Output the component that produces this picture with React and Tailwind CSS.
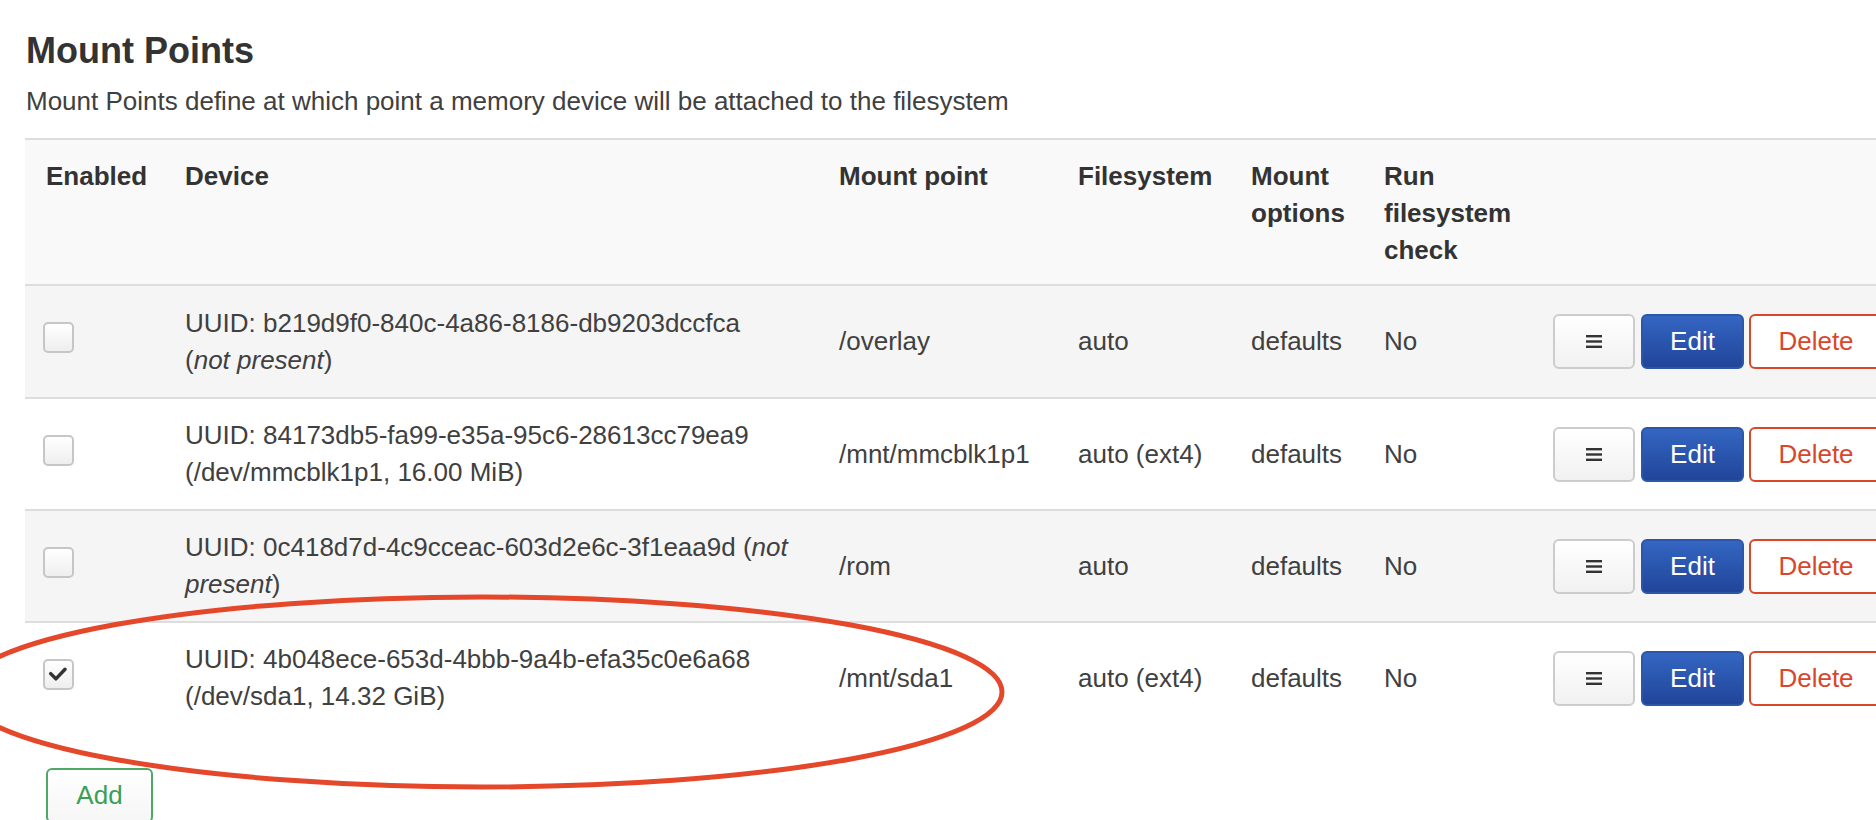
import React from 'react'

const rows = [
  {
    enabled: false,
    device: [
      'UUID: b219d9f0-840c-4a86-8186-db9203dccfca',
      <>
        (<i>not present</i>)
      </>,
    ],
    mount: '/overlay',
    fs: 'auto',
    striped: true,
  },
  {
    enabled: false,
    device: ['UUID: 84173db5-fa99-e35a-95c6-28613cc79ea9', '(/dev/mmcblk1p1, 16.00 MiB)'],
    mount: '/mnt/mmcblk1p1',
    fs: 'auto (ext4)',
    striped: false,
  },
  {
    enabled: false,
    device: [
      <>
        UUID: 0c418d7d-4c9cceac-603d2e6c-3f1eaa9d (<i>not</i>
      </>,
      <>
        <i>present</i>)
      </>,
    ],
    mount: '/rom',
    fs: 'auto',
    striped: true,
  },
  {
    enabled: true,
    device: ['UUID: 4b048ece-653d-4bbb-9a4b-efa35c0e6a68', '(/dev/sda1, 14.32 GiB)'],
    mount: '/mnt/sda1',
    fs: 'auto (ext4)',
    striped: false,
  },
]

const cols = 'grid grid-cols-[139px_654px_239px_173px_133px_169px_1fr]'

function Checkbox({ checked }) {
  return (
    <span className="mb-[8px] ml-[18px] flex h-[31px] w-[31px] items-center justify-center rounded-[5px] border-2 border-[#c6c6c6] bg-gradient-to-b from-white to-[#eeeeee]">
      {checked && (
        <svg width="31" height="31" viewBox="0 0 31 31">
          <polyline
            points="6.5,14.5 12.5,20.5 23,9.5"
            fill="none"
            stroke="#333"
            strokeWidth="4"
            strokeLinecap="round"
            strokeLinejoin="round"
          />
        </svg>
      )}
    </span>
  )
}

function Actions() {
  return (
    <div className="flex items-center pl-[21px]">
      <button className="flex h-[55px] w-[82px] items-center justify-center rounded-[6px] border-2 border-[#cccccc] bg-gradient-to-b from-white to-[#f1f1f1]">
        <svg width="16" height="13" viewBox="0 0 16 13">
          <rect x="0" y="0" width="16" height="2.4" fill="#333" />
          <rect x="0" y="5.3" width="16" height="2.4" fill="#333" />
          <rect x="0" y="10.6" width="16" height="2.4" fill="#333" />
        </svg>
      </button>
      <button className="ml-[6px] h-[55px] w-[103px] rounded-[6px] border-2 border-[#2b56aa] bg-gradient-to-b from-[#3466c2] to-[#21459a] text-[26px] text-white">
        Edit
      </button>
      <button className="ml-[5px] h-[55px] w-[150px] shrink-0 rounded-[6px] border-2 border-[#d9472b] bg-white pr-[16px] text-[26px] text-[#d9472b]">
        Delete
      </button>
    </div>
  )
}

export default function App() {
  return (
    <div className="relative h-[820px] w-full overflow-hidden bg-white font-['Liberation_Sans',Arial,sans-serif] text-[#404040]">
      {/* Heading */}
      <div className="pl-[26px] pt-[31px]">
        <h2 className="text-[36px] font-bold leading-[40px] text-[#333]">Mount Points</h2>
        <p className="mt-[13px] text-[26px] leading-[34px]">
          Mount Points define at which point a memory device will be attached to the filesystem
        </p>
      </div>

      {/* Table */}
      <div className="ml-[25px] mt-[20px] w-[1900px] text-[26px] leading-[37px]">
        <div className={`${cols} h-[148px] border-y-2 border-[#dddddd] bg-[#f9f9f9] font-bold text-[#333]`}>
          <div className="pl-[21px] pt-[18px]">Enabled</div>
          <div className="pl-[21px] pt-[18px]">Device</div>
          <div className="pl-[21px] pt-[18px]">Mount point</div>
          <div className="pl-[21px] pt-[18px]">Filesystem</div>
          <div className="pl-[21px] pt-[18px]">Mount options</div>
          <div className="pl-[21px] pr-[10px] pt-[18px]">Run filesystem check</div>
          <div />
        </div>

        {rows.map((r, i) => (
          <div
            key={i}
            className={`${cols} items-center ${i === 0 ? 'h-[111px]' : 'h-[112px] border-t-2 border-[#dddddd]'} ${
              r.striped ? 'bg-[#f5f5f5]' : 'bg-white'
            }`}
          >
            <div className="flex items-center">
              <Checkbox checked={r.enabled} />
            </div>
            <div className="whitespace-nowrap pl-[21px]">
              <div>{r.device[0]}</div>
              <div>{r.device[1]}</div>
            </div>
            <div className="pl-[21px]">{r.mount}</div>
            <div className="pl-[21px]">{r.fs}</div>
            <div className="pl-[21px]">defaults</div>
            <div className="pl-[21px]">No</div>
            <Actions />
          </div>
        ))}
      </div>

      <div className="ml-[46px] mt-[35px]">
        <button className="h-[55px] w-[107px] rounded-[6px] border-2 border-[#4fa864] bg-gradient-to-b from-white to-[#f6f6f6] text-[26px] text-[#3b9f56]">
          Add
        </button>
      </div>

      {/* Annotation */}
      <svg className="pointer-events-none absolute left-0 top-0" width="1876" height="820">
        <ellipse cx="482" cy="692" rx="520" ry="95" fill="none" stroke="#e5472a" strokeWidth="5" />
      </svg>
    </div>
  )
}
